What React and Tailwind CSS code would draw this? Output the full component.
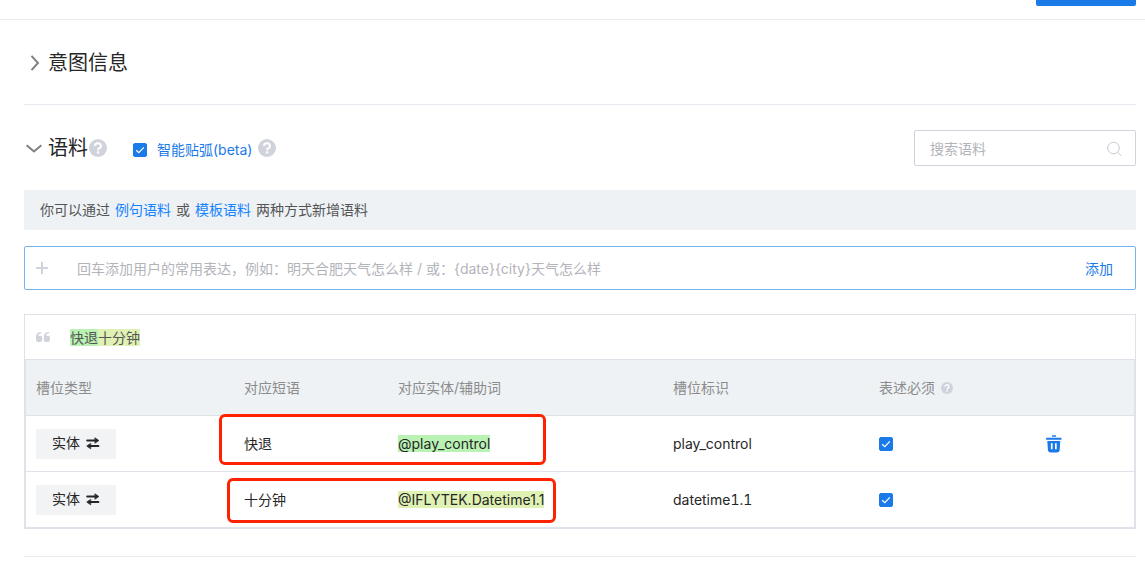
import React from "react";

function Help({ className }) {
  return (
    <svg viewBox="0 0 18 18" className={className} aria-hidden="true">
      <circle cx="9" cy="9" r="9" fill="#d0d3dc" />
      <path d="M6.100 7a2.900 2.700 0 1 1 4.400 2.200c-.9.6-1.400 1-1.400 2" fill="none" stroke="#fff" strokeWidth="2" />
      <rect x="8" y="12.300" width="2.200" height="2.200" fill="#fff" />
    </svg>
  );
}

function Checkbox({ id, label }) {
  return (
    <span className="relative block size-3.5 shrink-0">
      <input
        id={id}
        type="checkbox"
        defaultChecked
        aria-label={label}
        className="peer block size-3.5 appearance-none rounded-xs border border-[#d0d3dc] checked:border-[#1a7ae8] checked:bg-[#1a7ae8]"
      />
      <svg viewBox="0 0 14 14" className="pointer-events-none absolute inset-0 hidden size-3.5 peer-checked:block" aria-hidden="true">
        <path d="M3.2 7.2l2.600 2.500 5-5.400" fill="none" stroke="#fff" strokeWidth="1.2" />
      </svg>
    </span>
  );
}

function SwapIcon() {
  return (
    <svg viewBox="0 0 14 14" className="size-3.5" fill="none" stroke="#262626" strokeWidth="2" strokeLinecap="round" aria-hidden="true">
      <path d="M1.200 4.500H10M4 10.100h8.400" />
      <path d="M9.200 2l3.600 2.500-3.600 2.500zM4.400 7.600L.8 10.100l3.600 2.500z" fill="#262626" strokeWidth="0.8" strokeLinejoin="round" />
    </svg>
  );
}

function TrashIcon() {
  return (
    <svg viewBox="0 0 16 18" className="h-[18px] w-4" aria-hidden="true">
      <path
        fill="#1a7ae8"
        fillRule="evenodd"
        d="M6.700.300h2.600q.8 0 .8.800v.7H5.900v-.7q0-.8.8-.8zM.9 2.800h13.800q.8 0 .8.800v1.200H.1V3.600q0-.8.8-.8zM1.300 6h13l-.6 8.800q-.2 2.700-2.900 2.700h-6q-2.700 0-2.900-2.700zM4.900 8.300v6h1.700v-6zM9 8.300v6h1.700v-6z"
      />
    </svg>
  );
}

const slots = [
  {
    phrase: "快退",
    entity: "@play_control",
    mark: "bg-[#b9f2b3]",
    name: "play_control",
    outline: "-left-[15px] -top-0.5 h-[51px] w-[327px]",
    removable: true,
  },
  {
    phrase: "十分钟",
    entity: "@IFLYTEK.Datetime1.1",
    mark: "bg-[#dff2b3]",
    name: "datetime1.1",
    outline: "-left-[7px] top-1.5 h-[45px] w-[329px]",
    removable: false,
  },
];

export default function App() {
  return (
    <div className="bg-white font-['Inter','Noto_Sans_CJK_SC',sans-serif] text-sm text-[#262626]">
      <header className="flex h-5 items-start justify-end border-b border-[#e7e9f0] pr-[9px]">
        <button type="button" aria-label="保存" className="h-1.5 w-[100px] rounded-b-xs bg-[#1a7ae8]" />
      </header>

      <main className="pr-[9px] pb-6 pl-6">
        <section className="flex h-[85px] items-center border-b border-[#e7e9f0] pt-0.5">
          <h2>
            <button type="button" className="flex items-center gap-1.5 text-xl">
              <svg viewBox="0 0 18 16" className="h-4 w-[18px]" aria-hidden="true">
                <path d="M7.500 .8l6.500 7.200-6.500 7.200" fill="none" stroke="#808080" strokeWidth="2" />
              </svg>
              意图信息
            </button>
          </h2>
        </section>

        <section className="border-b border-[#e7e9f0] pt-[25px] pb-[27px]">
          <div className="flex items-center">
            <h2>
              <button type="button" className="flex items-center gap-1.5 text-xl">
                <svg viewBox="0 0 18 16" className="h-4 w-[18px]" aria-hidden="true">
                  <path d="M2.600 5.200l7.400 6.200 7.400-6.200" fill="none" stroke="#808080" strokeWidth="2" />
                </svg>
                语料
              </button>
            </h2>
            <Help className="ml-px size-[18px]" />
            <div className="ml-[26px] flex items-center gap-2.5 pt-1">
              <Checkbox id="smart" />
              <label htmlFor="smart" className="text-[#1a7ae8]">智能贴弧(beta)</label>
            </div>
            <Help className="ml-1.5 size-[18px]" />
            <div className="ml-auto flex h-9 w-[222px] items-center rounded-xs border border-[#d0d3dc] px-[15px] pt-0.5">
              <input
                type="search"
                aria-label="搜索语料"
                placeholder="搜索语料"
                className="min-w-0 flex-1 bg-transparent outline-none placeholder:text-[#b2b4ba]"
              />
              <svg viewBox="0 0 16 16" className="-mr-0.5 size-4" fill="none" stroke="#c6c9d3" aria-hidden="true">
                <circle cx="7.500" cy="7" r="5.800" />
                <path d="M11.700 11.200l3.800 3.800" />
              </svg>
            </div>
          </div>

          <p className="mt-6 flex h-10 items-center gap-[5px] rounded-xs bg-[#eef2f5] px-4 text-[#555]">
            你可以通过
            <a href="#example" className="text-[#1784ff]">例句语料</a>
            或
            <a href="#template" className="text-[#1784ff]">模板语料</a>
            两种方式新增语料
          </p>

          <form className="mt-4 flex h-11 items-center rounded-xs border border-[#78b4f0] pr-[22px] pl-[11px]">
            <svg viewBox="0 0 12 12" className="size-3" aria-hidden="true">
              <path d="M6 0v12M0 6h12" stroke="#d0d3dc" strokeWidth="2" />
            </svg>
            <input
              type="text"
              aria-label="添加语料"
              placeholder="回车添加用户的常用表达，例如：明天合肥天气怎么样 / 或：{date}{city}天气怎么样"
              className="ml-[29px] min-w-0 flex-1 bg-transparent pt-0.5 outline-none placeholder:text-[#b2b4ba]"
            />
            <button type="button" className="pt-0.5 text-[#1a7ae8]">添加</button>
          </form>

          <div className="mt-6 border border-[#dfe2e9]">
            <div className="flex h-11 items-center gap-5 pl-[11px]">
              <svg viewBox="0 0 14 10" className="h-2.5 w-3.5" fill="#d0d3dc" aria-hidden="true">
                <path d="M5.300 0v1.200C3.400 1.300 2.400 2.200 2.200 3.700h2.300q1.700 0 1.700 1.700v2.400Q6.200 10 4 10H2.200Q0 10 0 7.800V5C0 1.800 1.800.1 5.300 0z" />
                <path d="M13.100 0v1.200c-1.900.1-2.900 1-3.100 2.500h2.300q1.700 0 1.700 1.700v2.400Q14 10 11.800 10H10q-2.200 0-2.200-2.200V5c0-3.200 1.800-4.900 5.300-5z" />
              </svg>
              <p className="pt-0.5 leading-4 text-[#555]">
                <mark className="bg-[#b9f2b3] text-inherit">快退</mark>
                <mark className="bg-[#dff2b3] text-inherit">十分钟</mark>
              </p>
            </div>

            <div className="border border-[#dfe2e9]">
              <table className="w-full table-fixed border-separate border-spacing-0 text-left">
                <colgroup>
                  <col className="w-[208px]" />
                  <col className="w-[154px]" />
                  <col />
                  <col className="w-[206px]" />
                  <col className="w-[167px]" />
                  <col className="w-[98px]" />
                </colgroup>
                <thead className="bg-[#eef2f5] text-[#8c8c8c]">
                  <tr className="h-14">
                    <th className="border-b border-[#dfe2e9] px-2.5 font-normal">槽位类型</th>
                    <th className="border-b border-[#dfe2e9] px-2.5 font-normal">对应短语</th>
                    <th className="border-b border-[#dfe2e9] px-2.5 font-normal">对应实体/辅助词</th>
                    <th className="border-b border-[#dfe2e9] px-2.5 font-normal">槽位标识</th>
                    <th className="border-b border-[#dfe2e9] px-2.5 font-normal">
                      <span className="flex items-center gap-1.5">
                        表述必须
                        <Help className="size-3" />
                      </span>
                    </th>
                    <th className="border-b border-[#dfe2e9]" aria-label="操作" />
                  </tr>
                </thead>
                <tbody className="[&>tr:first-child>td]:border-b">
                  {slots.map((slot) => (
                    <tr key={slot.name} className="h-14 last:h-[55px]">
                      <td className="border-[#dfe2e9] px-2.5">
                        <button type="button" className="flex h-[30px] w-20 items-center justify-center gap-1.5 rounded-xs bg-[#f2f3f5] pb-0.5">
                          实体
                          <SwapIcon />
                        </button>
                      </td>
                      <td className="relative border-[#dfe2e9] px-2.5">
                        {slot.phrase}
                        <span className={`pointer-events-none absolute rounded-md border-3 border-[#ff2200] ${slot.outline}`} />
                      </td>
                      <td className="border-[#dfe2e9] px-2.5">
                        <mark className={`text-inherit ${slot.mark}`}>{slot.entity}</mark>
                      </td>
                      <td className="border-[#dfe2e9] px-2.5 tabular-nums">{slot.name}</td>
                      <td className="border-[#dfe2e9] px-2.5">
                        <Checkbox id={`required-${slot.name}`} label={`${slot.name} 表述必须`} />
                      </td>
                      <td className="border-[#dfe2e9] px-2.5">
                        {slot.removable && (
                          <button type="button" aria-label="删除" className="block">
                            <TrashIcon />
                          </button>
                        )}
                      </td>
                    </tr>
                  ))}
                </tbody>
              </table>
            </div>
          </div>
        </section>
      </main>
    </div>
  );
}
